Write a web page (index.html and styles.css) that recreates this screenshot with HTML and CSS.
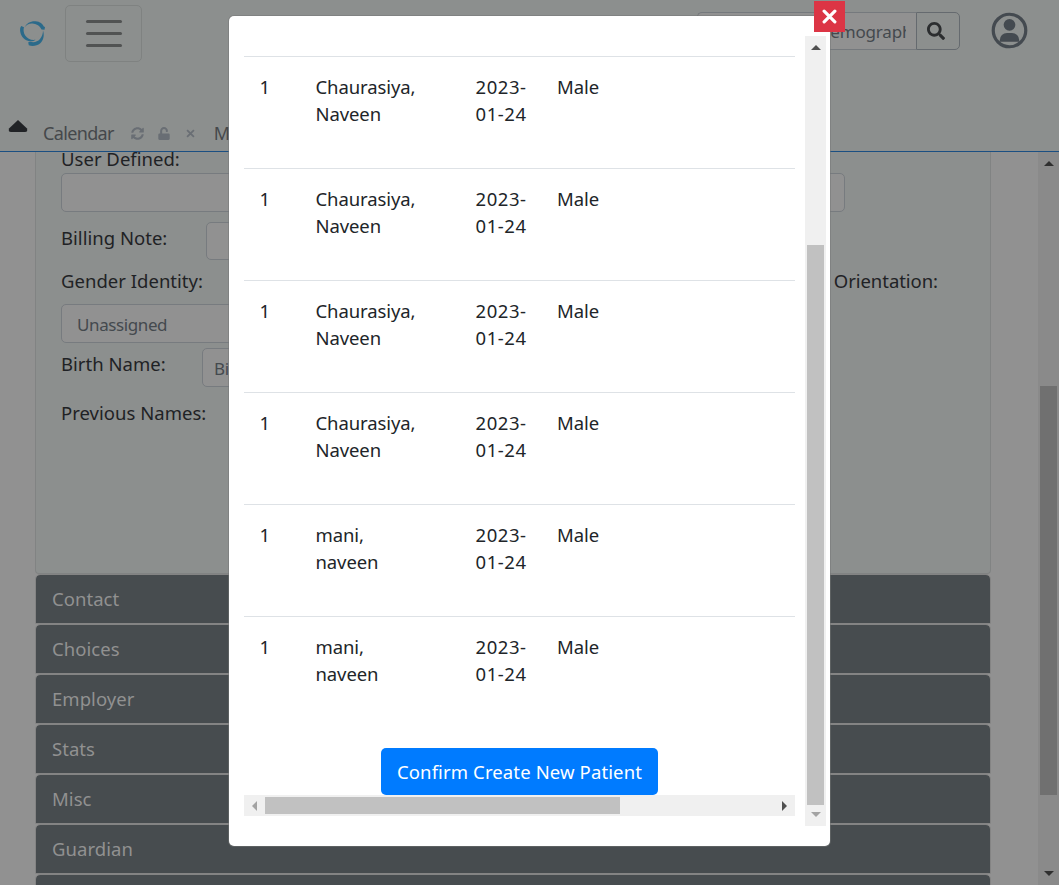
FILE: index.html
```html
<!DOCTYPE html>
<html lang="en">
<head>
<meta charset="utf-8">
<title>Create Patient</title>
<link rel="stylesheet" href="styles.css">
</head>
<body>
<div class="app">
  <header class="header">
    <div class="navbar">
      <svg class="logo" viewBox="0 0 27 27" fill="#2b6a8a">
        <path d="M5.500 7.500C7.500 3 12 .8 16.500 1.200 21 1.500 24 4 24.800 6.600L26 7 25.500 9.800 22.500 9.500C20.500 5.500 17 3.800 13.500 3.600 10 3.400 7.500 5 5.500 7.500Z"/>
        <path d="M2.200 6 5 7.200C4.200 9.500 4.500 12.500 6 15.200 8.500 19 12 20.300 16.500 19.800 14 21.800 9.500 22 6 19.600 2 16.500 .5 11.500 1.300 7.800Z"/>
        <path d="M24 10.500C25.500 15 24.700 20 21.300 23.300 18 26 13 26.500 9.800 25.200L9.200 22.200 11.500 21.800C15 22.800 18.500 21.800 21 19 23 16.500 24 13.500 24 10.500Z"/>
      </svg>
      <div class="toggler"><span></span><span></span><span></span></div>
      <div class="search">
        <div class="search-input"><div class="search-text">Search by any demographics</div></div>
        <div class="search-button"><svg viewBox="0 0 512 512" width="18" height="18" fill="#2b2d2f"><path d="M505 442.700 405.300 343c-4.500-4.500-10.600-7-17-7H372c27.600-35.300 44-79.700 44-128C416 93.100 322.900 0 208 0S0 93.100 0 208s93.100 208 208 208c48.300 0 92.700-16.400 128-44v16.300c0 6.400 2.500 12.500 7 17l99.700 99.700c9.400 9.400 24.600 9.400 33.900 0l28.300-28.300c9.400-9.400 9.400-24.600.1-34zM208 336c-70.700 0-128-57.200-128-128 0-70.700 57.200-128 128-128 70.700 0 128 57.200 128 128 0 70.700-57.200 128-128 128z"/></svg></div>
      </div>
      <svg class="user" viewBox="0 0 38 38"><circle cx="19" cy="19" r="16.700" fill="none" stroke="#444a50" stroke-width="3.300"/><circle cx="19" cy="13.200" r="6" fill="#444a50"/><path d="M9 30.500v-1.500a7.500 7.500 0 0 1 7.500-7.500h5a7.500 7.500 0 0 1 7.500 7.500v1.500z" fill="#444a50"/></svg>
    </div>
    <div class="tabs">
      <svg class="caret" viewBox="0 0 20 12"><path d="M10 0 19 8.500Q20 12 17 12H3Q0 12 1 8.500Z" fill="#212326"/></svg>
      <span class="tab-name">Calendar</span>
      <svg class="refresh" viewBox="0 0 512 512" fill="#696e74"><path d="M370.700 133.300C339.500 104 298.900 88 255.800 88c-77.500.1-144.300 53.200-162.800 126.900-1.300 5.400-6.100 9.100-11.700 9.100H24.100c-7.500 0-13.200-6.800-11.800-14.200C33.900 94.900 134.800 8 256 8c66.400 0 126.800 26.100 171.300 68.700L463 41C478.100 25.900 504 36.600 504 57.900V192c0 13.300-10.700 24-24 24H345.900c-21.400 0-32.100-25.900-17-41zM32 296h134.100c21.400 0 32.100 25.900 17 41l-41.800 41.800c31.300 29.300 71.800 45.300 114.900 45.200 77.400-.1 144.300-53.100 162.800-126.800 1.300-5.400 6.100-9.200 11.700-9.200h57.300c7.500 0 13.200 6.800 11.800 14.200C478.100 417.100 377.200 504 256 504c-66.400 0-126.800-26.100-171.300-68.700L49 471c-15.100 15.100-41 4.400-41-16.900V320c0-13.300 10.700-24 24-24z"/></svg>
      <svg class="lock" viewBox="0 0 448 512" fill="#696e74"><path d="M400 256H152V153c0-40 32-73 72-73s72 32 72 72v16c0 13 11 24 24 24h32c13 0 24-11 24-24v-16C376 68 307 0 223 0S72 70 72 154v102H48c-26 0-48 21-48 48v160c0 27 22 48 48 48h352c27 0 48-21 48-48V304c0-27-21-48-48-48z"/></svg>
      <svg class="times" viewBox="0 0 10 10"><path d="M1.200 1.200 8.800 8.800M8.800 1.200 1.200 8.800" stroke="#696e74" stroke-width="2"/></svg>
      <span class="tab-name">Messages</span>
    </div>
  </header>
  <main class="main">
    <div class="content">
      <section class="panel">
        <div class="label">User Defined:</div>
        <div class="input wide"></div>
        <div class="row billing"><div class="label">Billing Note:</div><div class="input"></div></div>
        <div class="row gender"><div class="label">Gender Identity:</div><div class="label orientation">Sexual Orientation:</div></div>
        <div class="input select">Unassigned</div>
        <div class="row birth"><div class="label">Birth Name:</div><div class="input">Birth Name</div></div>
        <div class="label previous">Previous Names:</div>
      </section>
      <div class="card">Contact</div>
      <div class="card">Choices</div>
      <div class="card">Employer</div>
      <div class="card">Stats</div>
      <div class="card">Misc</div>
      <div class="card">Guardian</div>
      <div class="card"></div>
    </div>
    <div class="page-scroll">
      <svg viewBox="0 0 10 5"><path d="M0 5 5 0 10 5Z"/></svg>
      <div class="page-thumb"></div>
      <svg class="down" viewBox="0 0 10 5"><path d="M0 0H10L5 5Z"/></svg>
    </div>
  </main>
</div>
<div class="modal">
  <div class="results">
    <div class="table">
      <div class="result"><span>1</span><span>Chaurasiya,<br>Naveen</span><span class="date">2023-<br>01-24</span><span>Male</span></div>
      <div class="result"><span>1</span><span>Chaurasiya,<br>Naveen</span><span class="date">2023-<br>01-24</span><span>Male</span></div>
      <div class="result"><span>1</span><span>Chaurasiya,<br>Naveen</span><span class="date">2023-<br>01-24</span><span>Male</span></div>
      <div class="result"><span>1</span><span>Chaurasiya,<br>Naveen</span><span class="date">2023-<br>01-24</span><span>Male</span></div>
      <div class="result"><span>1</span><span>mani,<br>naveen</span><span class="date">2023-<br>01-24</span><span>Male</span></div>
      <div class="result"><span>1</span><span>mani,<br>naveen</span><span class="date">2023-<br>01-24</span><span>Male</span></div>
    </div>
    <button class="confirm">Confirm Create New Patient</button>
    <div class="hscroll">
      <svg viewBox="0 0 5 10" fill="#a3a3a3"><path d="M5 0V10L0 5Z"/></svg>
      <div class="hthumb"></div>
      <svg class="right" viewBox="0 0 5 10" fill="#505050"><path d="M0 0V10L5 5Z"/></svg>
    </div>
  </div>
  <div class="vscroll">
    <svg viewBox="0 0 10 5" fill="#505050"><path d="M0 5 5 0 10 5Z"/></svg>
    <div class="vthumb"></div>
    <svg viewBox="0 0 10 5" fill="#a3a3a3"><path d="M0 0H10L5 5Z"/></svg>
  </div>
  <div class="close"><svg viewBox="0 0 14 14"><path d="M2 2 12 12M12 2 2 12" stroke="#fff" stroke-width="3" stroke-linecap="round"/></svg></div>
</div>
</body>
</html>
```
FILE: styles.css
```css
* { box-sizing: border-box; }
body {
  margin: 0;
  width: 1059px;
  height: 885px;
  overflow: hidden;
  position: relative;
  background: #919191;
  color: #1f2225;
  font: 18.5px/27px "Noto Sans", "Open Sans", sans-serif;
}
svg { display: block; flex: none; }
.app { height: 885px; display: flex; flex-direction: column; }

.header { flex: none; height: 152px; background: #8c8f8e; border-bottom: 1px solid #1b4f82; }
.navbar { display: flex; align-items: flex-start; height: 115px; padding: 5px 31px 0 19px; }
.logo { width: 27px; height: 27px; margin-top: 15px; flex: none; }
.toggler {
  width: 77px; height: 57px; margin-left: 19px; flex: none;
  border: 1px solid #7f8281; border-radius: 5px;
  display: flex; flex-direction: column; align-items: center; justify-content: center; gap: 9px;
}
.toggler span { width: 36px; height: 3px; border-radius: 2px; background: #515353; }
.search { display: flex; flex: none; width: 263px; height: 38px; margin: 7px 0 0 555px; }
.search-input {
  width: 219px; padding: 5px 10px 0 10px;
  border: 1px solid #75797d; border-right: 0; border-radius: 5px 0 0 5px;
  background: #919191; color: #44494e;
}
.search-text { font-size: 17px; letter-spacing: -.18px; white-space: nowrap; overflow: hidden; }
.search-button {
  width: 44px; display: flex; align-items: center; justify-content: center; padding-right: 4px;
  border: 1px solid #656a6f; border-radius: 0 5px 5px 0;
}
.user { width: 37px; height: 37px; margin: 7px 0 0 31px; }
.tabs { display: flex; align-items: center; height: 36px; padding-left: 8px; color: #45484b; overflow: hidden; white-space: nowrap; }
.caret { width: 20px; height: 12px; margin: -14px 15px 0 0; }
.tab-name { font-size: 18px; letter-spacing: -.65px; }
.refresh { width: 13px; height: 13px; margin-left: 17px; }
.lock { width: 12px; height: 13px; margin-left: 14px; }
.times { width: 9px; height: 9px; margin: 0 19px 0 16px; }

.main { flex: 1; min-height: 0; display: flex; overflow: hidden; }
.content { width: 956px; margin-left: 35px; flex: none; }
.panel {
  height: 422px; padding-left: 25px; overflow: hidden;
  background: #8c8f8e; border: 1px solid #818383; border-top: 0; border-radius: 0 0 4px 4px;
}
.panel > .label:first-child { margin: -7px 0 1px; }
.label { letter-spacing: .02px; white-space: nowrap; }
.row { display: flex; }
.input {
  height: 39px; padding: 6px 11px; border: 1px solid #777b7f; border-radius: 5px;
  background: #919191; color: #44494e; font-size: 17px; letter-spacing: -.4px;
}
.wide { width: 784px; }
.billing { margin-top: 10px; height: 46px; align-items: flex-start; }
.billing .label { width: 145px; padding-top: 2px; }
.billing .input, .birth .input { width: 400px; }
.billing .input { height: 38px; }
.gender { height: 36px; }
.gender .label { margin-top: -1px; }
.gender .orientation { margin-left: auto; margin-right: 52px; letter-spacing: -.05px; }
.select { width: 300px; padding-left: 15px; }
.birth { margin-top: 5px; height: 51px; align-items: flex-start; }
.birth .label { width: 141px; padding-top: 2px; }
.card {
  height: 50px; padding: 10px 16px 0; letter-spacing: .05px;
  background: #474c4f; background-clip: padding-box;
  border: 1px solid #848484; border-radius: 5px 5px 0 0; color: #919191;
}
.page-scroll { width: 21px; margin-left: auto; padding: 9px 0; background: #8a8a8a; display: flex; flex-direction: column; align-items: center; }
.page-scroll svg { width: 10px; height: 5px; fill: #303030; }
.page-thumb { width: 17px; height: 409px; margin-top: 220px; background: #707070; }
.down { margin-top: auto; }

.modal {
  position: absolute; left: 229px; top: 16px; width: 601px; height: 830px;
  display: flex; background: #fff; border-radius: 5px; padding-left: 15px;
  box-shadow: 0 0 0 1px #73767580; color: #212529;
}
.results { width: 551px; padding-top: 40px; display: flex; flex-direction: column; }
.result {
  height: 112px; padding: 16px 0 0 15.500px; border-top: 1px solid #dee2e6;
  display: grid; grid-template-columns: 56px 160px 81.500px 1fr; letter-spacing: -.1px;
}
.date { letter-spacing: .55px; }
.confirm {
  align-self: center; width: 277px; height: 47px; margin: 20px 0 0; padding: 0;
  border: 0; border-radius: 5px; background: #007bff; color: #fff;
  font: inherit; letter-spacing: .12px; white-space: nowrap;
}
.hscroll { height: 21px; background: #f0f0f0; display: flex; align-items: center; padding: 0 8px; }
.hscroll svg { width: 5px; height: 10px; }
.hthumb { width: 355px; height: 17px; margin-left: 8px; background: #c1c1c1; }
.right { margin-left: auto; }
.vscroll {
  width: 21px; height: 790px; margin: 20px 0 0 10px; padding: 9px 0;
  background: #f0f0f0; display: flex; flex-direction: column; align-items: center;
}
.vscroll svg { width: 10px; height: 5px; }
.vthumb { width: 17px; height: 560px; margin: 195px 0 7px; background: #c1c1c1; }
.close {
  position: absolute; right: -15px; top: -15px; width: 31px; height: 31px;
  background: #dc3545; display: flex; align-items: center; justify-content: center;
}
.close svg { width: 15px; height: 15px; }
```
